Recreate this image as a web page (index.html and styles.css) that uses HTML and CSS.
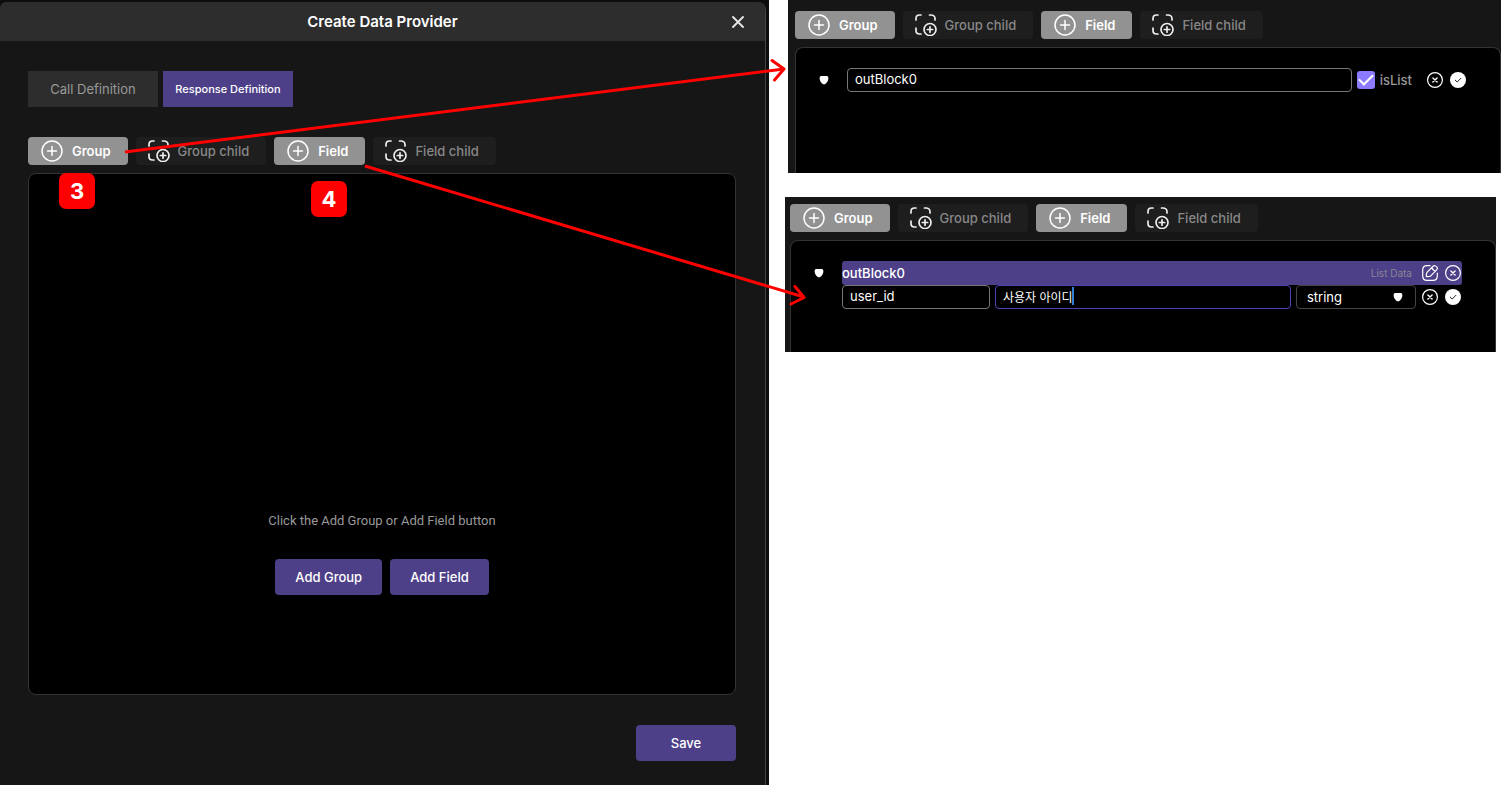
FILE: index.html
```html
<!DOCTYPE html>
<html lang="en">
<head>
<meta charset="utf-8">
<title>Create Data Provider</title>
<link rel="stylesheet" href="styles.css">
</head>
<body>
<svg class="defs" aria-hidden="true">
  <symbol id="plus" viewBox="0 0 22 22"><g fill="none" stroke="currentColor" stroke-width="1.500" stroke-linecap="round"><circle cx="11" cy="11" r="10"/><path d="M11 6.500v9M6.500 11h9"/></g></symbol>
  <symbol id="child" viewBox="0 0 22 22"><g fill="none" stroke="currentColor" stroke-width="1.700" stroke-linecap="round"><path d="M1 6V4.500C1 2.500 2.500 1 4.500 1H6M14.500 1H16c2 0 4 1.500 4 3.500V6M1 14v2.500c0 2 1.500 3.500 3.500 3.500H6"/><circle cx="15" cy="15.500" r="6"/><path d="M15 12.800v5.400M12.300 15.500h5.400"/></g></symbol>
  <symbol id="down" viewBox="0 0 10 10"><path fill="currentColor" d="M2.300 1h5.400C9.300 1 9.700 3 9.200 4.700C8.700 6.500 7.700 7.800 6.600 8.700c-1 .8-2.200.8-3.200 0C2.300 7.800 1.300 6.500.8 4.700C.3 3 .7 1 2.300 1z"/></symbol>
  <symbol id="cancel" viewBox="0 0 16 16"><g fill="none" stroke="currentColor" stroke-linecap="round"><circle cx="8" cy="8" r="7.400" stroke-width="1.200"/><path stroke-width="1.400" d="M5.900 5.900l4.200 4.200M10.100 5.900l-4.200 4.200"/></g></symbol>
  <symbol id="ok" viewBox="0 0 16 16"><circle cx="8" cy="8" r="8" fill="currentColor"/><path d="M5.300 8.200l1.900 1.800 3.700-3.700" fill="none" stroke="#222" stroke-linecap="round"/></symbol>
  <symbol id="edit" viewBox="0 0 16 16"><g fill="none" stroke="currentColor" stroke-width="1.200" stroke-linecap="round" stroke-linejoin="round"><path d="M8 .7H5C2 .7.7 2 .7 5v6c0 3 1.300 4.300 4.300 4.300h6c3 0 4.300-1.300 4.300-4.300V8"/><path d="M10.800 1.500L5.200 7.200c-.4.400-.5.800-.6 1.200l-.3 2.300c-.1.700.3 1.100 1 1l2.300-.3c.4-.1.800-.2 1.200-.6l5.600-5.600c1.300-1.300 1.300-2.300.3-3.400s-2.500-1.600-3.900-.3zM9.800 2.500c.5 1.900 1.800 3.100 3.600 3.700"/></g></symbol>
</svg>

<main class="board">
  <section class="backdrop">
    <div class="dialog">
      <header class="dialog-head">
        <h1 class="dialog-title">Create Data Provider</h1>
        <button class="close" type="button" aria-label="Close"><svg viewBox="0 0 12 12"><path d="M1 1l10 10M11 1L1 11" fill="none" stroke="currentColor" stroke-width="1.800" stroke-linecap="round"/></svg></button>
      </header>
      <div class="dialog-body">
        <nav class="tabs">
          <button class="tab" type="button">Call Definition</button>
          <button class="tab tab-active" type="button">Response Definition</button>
        </nav>
        <div class="toolbar">
          <button class="tool tool-on" type="button"><svg><use href="#plus"/></svg>Group</button>
          <button class="tool tool-off" type="button"><svg><use href="#child"/></svg>Group child</button>
          <button class="tool tool-on" type="button"><svg><use href="#plus"/></svg>Field</button>
          <button class="tool tool-off" type="button"><svg><use href="#child"/></svg>Field child</button>
        </div>
        <div class="empty">
          <p class="hint">Click the Add Group or Add Field button</p>
          <div class="empty-actions">
            <button class="primary" type="button">Add Group</button>
            <button class="primary" type="button">Add Field</button>
          </div>
        </div>
        <footer class="dialog-foot"><button class="primary save" type="button">Save</button></footer>
      </div>
    </div>
  </section>

  <div class="steps">
    <section class="panel panel-group">
      <div class="toolbar">
        <button class="tool tool-on" type="button"><svg><use href="#plus"/></svg>Group</button>
        <button class="tool tool-off" type="button"><svg><use href="#child"/></svg>Group child</button>
        <button class="tool tool-on" type="button"><svg><use href="#plus"/></svg>Field</button>
        <button class="tool tool-off" type="button"><svg><use href="#child"/></svg>Field child</button>
      </div>
      <div class="tree">
        <svg class="marker"><use href="#down"/></svg>
        <div class="row">
          <input class="box grow" type="text" value="outBlock0" aria-label="Group name">
          <label class="check"><input type="checkbox" checked>isList</label>
          <span class="actions">
            <button class="icon" type="button" aria-label="Cancel"><svg><use href="#cancel"/></svg></button>
            <button class="icon" type="button" aria-label="Confirm"><svg><use href="#ok"/></svg></button>
          </span>
        </div>
      </div>
    </section>

    <section class="panel panel-field">
      <div class="toolbar">
        <button class="tool tool-on" type="button"><svg><use href="#plus"/></svg>Group</button>
        <button class="tool tool-off" type="button"><svg><use href="#child"/></svg>Group child</button>
        <button class="tool tool-on" type="button"><svg><use href="#plus"/></svg>Field</button>
        <button class="tool tool-off" type="button"><svg><use href="#child"/></svg>Field child</button>
      </div>
      <div class="tree">
        <svg class="marker"><use href="#down"/></svg>
        <div class="rows">
          <div class="row row-head">
            <span class="group-name grow">outBlock0</span>
            <span class="kind">List Data</span>
            <span class="actions">
              <button class="icon" type="button" aria-label="Edit"><svg><use href="#edit"/></svg></button>
              <button class="icon" type="button" aria-label="Delete"><svg><use href="#cancel"/></svg></button>
            </span>
          </div>
          <div class="row row-field">
            <input class="box box-id" type="text" value="user_id" aria-label="Field id">
            <span class="editing"><input class="box box-focus" type="text" value="사용자 아이디" aria-label="Field name"><i class="caret"></i></span>
            <span class="type"><select class="box box-type" aria-label="Field type"><option>string</option></select><svg class="type-arrow"><use href="#down"/></svg></span>
            <span class="actions">
              <button class="icon" type="button" aria-label="Cancel"><svg><use href="#cancel"/></svg></button>
              <button class="icon" type="button" aria-label="Confirm"><svg><use href="#ok"/></svg></button>
            </span>
          </div>
        </div>
      </div>
    </section>
  </div>

  <span class="badge badge-3">3</span>
  <span class="badge badge-4">4</span>
  <svg class="arrows" viewBox="0 0 1501 785" aria-hidden="true">
    <g fill="none" stroke="#f00" stroke-width="3">
      <path d="M125 152L784 69"/><path d="M365 166L804 297"/>
      <path stroke-linecap="round" stroke-linejoin="round" d="M772 60.500L784 69L774.500 80M795 286.500L804 297.500L791 304"/>
    </g>
  </svg>
</main>
</body>
</html>
```
FILE: styles.css
```css
* { box-sizing: border-box; }
body {
  margin: 0;
  background: #fff;
  font-family: Inter, "Noto Sans CJK KR", sans-serif;
  font-size: 13px;
  color: #fff;
}
button, input, select { font: inherit; color: inherit; margin: 0; }
button { border: 0; padding: 0; background: none; }
.defs { position: absolute; width: 0; height: 0; }

.board {
  position: relative;
  display: grid;
  grid-template-columns: 769fr 732fr;
  min-height: 100vh;
}

.backdrop { display: flex; padding: 2px 3px 0 0; background: #0d0d0d; }
.dialog {
  flex: 1;
  display: flex;
  flex-direction: column;
  border-right: 1px solid #444;
  border-radius: 6px 8px 0 0;
  background: #161616;
}
.dialog-head {
  display: flex;
  align-items: center;
  height: 39px;
  padding: 0 20px 0 34px;
  border-radius: 6px 8px 0 0;
  background: #2d2d2d;
}
.dialog-title { flex: 1; margin: 0; font-size: 15px; font-weight: 600; text-align: center; }
.close { display: flex; color: #e8e8e8; }
.close svg { width: 14px; height: 12px; }
.dialog-body { flex: 1; display: flex; flex-direction: column; padding: 30px 29px 24px 28px; }

.tabs { display: flex; gap: 5px; margin-bottom: 30px; }
.tab { width: 130px; height: 36px; background: #2d2d2d; color: #999; }
.tab-active { background: #4d4088; color: #fff; font-size: 11px; font-weight: 500; }

.toolbar { display: flex; gap: 8px; margin-bottom: 8px; }
.tool {
  display: flex;
  align-items: center;
  gap: 9px;
  height: 28px;
  padding: 0 17px 0 13px;
  border-radius: 4px;
  white-space: nowrap;
}
.tool svg { flex: none; width: 22px; height: 22px; }
.tool-on { background: #929292; font-weight: 600; }
.tool-off { padding: 0 17px 0 12px; gap: 8px; background: #1e1e1e; color: #888; font-weight: 500; }
.tool-off svg { color: #eee; }

.empty {
  flex: 1;
  display: flex;
  flex-direction: column;
  align-items: center;
  justify-content: flex-end;
  padding-bottom: 99px;
  border: 1px solid #333;
  border-radius: 8px;
  background: #000;
}
.hint { margin: 0 0 30px; color: #999; font-family: Roboto, sans-serif; line-height: 16px; }
.empty-actions { display: flex; gap: 8px; }
.primary { height: 36px; padding: 0 20px; border-radius: 4px; background: #4d4088; font-weight: 500; }
.dialog-foot { display: flex; justify-content: flex-end; margin-top: 30px; }
.save { width: 100px; }

.steps { display: flex; flex-direction: column; gap: 24px; }
.panel { display: flex; flex-direction: column; background: #161616; }
.panel-group { min-height: 173px; margin-left: 19px; padding: 11px 0 0 7px; }
.panel-field { min-height: 155px; margin: 0 5px 0 16px; padding: 7px 0 0 5px; }
.tree {
  flex: 1;
  display: flex;
  align-items: flex-start;
  gap: 18px;
  padding: 20px 34px 0 23px;
  border: 1px solid #333;
  border-width: 1px 1px 0;
  border-radius: 8px 8px 0 0;
  background: #000;
}
.panel-field .tree { padding-right: 33px; }
.marker { flex: none; width: 10px; height: 10px; margin-top: 7px; }
.rows { flex: 1; }
.row { flex: 1; display: flex; align-items: center; gap: 5px; height: 24px; }
.row-head { border-radius: 3px; background: #4d4088; }
.group-name { font-weight: 500; }
.kind { color: #8a8594; font-size: 10px; }
.grow { flex: 1; min-width: 0; }
.box {
  height: 24px;
  padding: 0 7px 2px;
  border: 1px solid #777;
  border-radius: 4px;
  background: #000;
  outline: 0;
}
.box-id { width: 148px; }
.editing { position: relative; flex: 1; display: flex; }
.box-focus { width: 100%; border-color: #4b42b8; font-size: 12px; }
.caret { position: absolute; left: 77px; top: 2px; width: 2px; height: 18px; background: #2f7fd0; }
.type { position: relative; display: flex; width: 120px; }
.box-type { width: 100%; padding: 0 10px; border-color: #444; appearance: none; }
.type-arrow { position: absolute; right: 13px; top: 7px; width: 10px; height: 10px; }
.check { display: flex; align-items: center; gap: 5px; color: #999; font-weight: 500; }
.check input {
  appearance: none;
  width: 18px;
  height: 18px;
  border-radius: 3px;
  background: #8c7bff;
  display: grid;
  place-items: center;
}
.check input::before {
  content: "";
  width: 12px;
  height: 6px;
  margin-bottom: 5px;
  border: solid #fff;
  border-width: 0 0 2px 2px;
  rotate: -45deg;
}
.actions { display: flex; gap: 7px; padding-left: 5px; }
.panel-group .actions { padding-left: 10px; }
.row-field .actions { padding-left: 1px; }
.row .actions { padding-right: 1px; }
.panel-group .row .actions { padding-right: 0; }
.icon { display: flex; }
.icon svg { width: 16px; height: 16px; overflow: visible; }

.badge {
  position: absolute;
  display: grid;
  place-items: center;
  width: 36px;
  height: 36px;
  border-radius: 7px;
  background: #f00;
  font-size: 22px;
  font-weight: 700;
}
.badge-3 { left: 59px; top: 173px; }
.badge-4 { left: 311px; top: 181px; }
.arrows { position: absolute; left: 0; top: 0; width: 100%; pointer-events: none; }
```
